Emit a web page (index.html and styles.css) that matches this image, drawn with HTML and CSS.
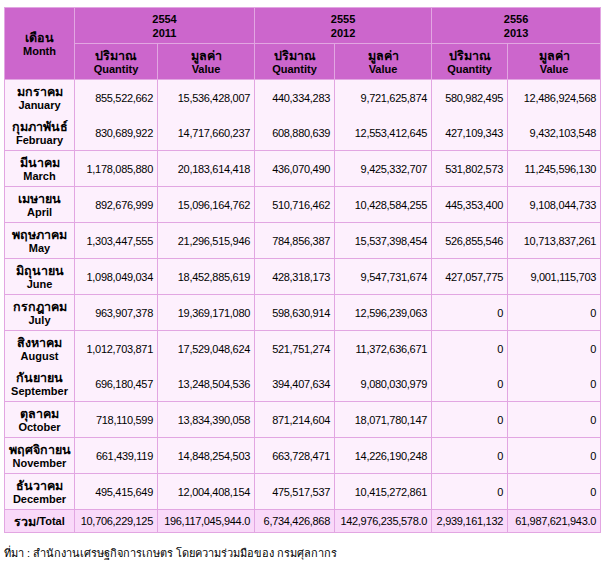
FILE: index.html
```html
<!DOCTYPE html>
<html lang="th">
<head>
<meta charset="utf-8">
<title>Export table</title>
<link rel="stylesheet" href="styles.css">
</head>
<body>
<div class="page">
<table class="data">
  <colgroup>
    <col class="c-month"><col class="c-q1"><col class="c-v1"><col class="c-q2"><col class="c-v2"><col class="c-q3"><col class="c-v3">
  </colgroup>
  <thead>
    <tr>
      <th rowspan="2" class="hd"><span class="th">เดือน</span><br>Month</th>
      <th colspan="2" class="hd">2554<br>2011</th>
      <th colspan="2" class="hd">2555<br>2012</th>
      <th colspan="2" class="hd">2556<br>2013</th>
    </tr>
    <tr>
      <th class="hd"><span class="th">ปริมาณ</span><br>Quantity</th><th class="hd"><span class="th">มูลค่า</span><br>Value</th>
      <th class="hd"><span class="th">ปริมาณ</span><br>Quantity</th><th class="hd"><span class="th">มูลค่า</span><br>Value</th>
      <th class="hd"><span class="th">ปริมาณ</span><br>Quantity</th><th class="hd"><span class="th">มูลค่า</span><br>Value</th>
    </tr>
  </thead>
  <tbody>
    <tr class="row no-bottom"><td class="month"><span class="th">มกราคม</span><br>January</td><td class="num">855,522,662</td><td class="num">15,536,428,007</td><td class="num">440,334,283</td><td class="num">9,721,625,874</td><td class="num">580,982,495</td><td class="num">12,486,924,568</td></tr>
    <tr class="row no-top"><td class="month"><span class="th">กุมภาพันธ์</span><br>February</td><td class="num">830,689,922</td><td class="num">14,717,660,237</td><td class="num">608,880,639</td><td class="num">12,553,412,645</td><td class="num">427,109,343</td><td class="num">9,432,103,548</td></tr>
    <tr class="row"><td class="month"><span class="th">มีนาคม</span><br>March</td><td class="num">1,178,085,880</td><td class="num">20,183,614,418</td><td class="num">436,070,490</td><td class="num">9,425,332,707</td><td class="num">531,802,573</td><td class="num">11,245,596,130</td></tr>
    <tr class="row"><td class="month"><span class="th">เมษายน</span><br>April</td><td class="num">892,676,999</td><td class="num">15,096,164,762</td><td class="num">510,716,462</td><td class="num">10,428,584,255</td><td class="num">445,353,400</td><td class="num">9,108,044,733</td></tr>
    <tr class="row"><td class="month"><span class="th">พฤษภาคม</span><br>May</td><td class="num">1,303,447,555</td><td class="num">21,296,515,946</td><td class="num">784,856,387</td><td class="num">15,537,398,454</td><td class="num">526,855,546</td><td class="num">10,713,837,261</td></tr>
    <tr class="row"><td class="month"><span class="th">มิถุนายน</span><br>June</td><td class="num">1,098,049,034</td><td class="num">18,452,885,619</td><td class="num">428,318,173</td><td class="num">9,547,731,674</td><td class="num">427,057,775</td><td class="num">9,001,115,703</td></tr>
    <tr class="row"><td class="month"><span class="th">กรกฎาคม</span><br>July</td><td class="num">963,907,378</td><td class="num">19,369,171,080</td><td class="num">598,630,914</td><td class="num">12,596,239,063</td><td class="num">0</td><td class="num">0</td></tr>
    <tr class="row no-bottom"><td class="month"><span class="th">สิงหาคม</span><br>August</td><td class="num">1,012,703,871</td><td class="num">17,529,048,624</td><td class="num">521,751,274</td><td class="num">11,372,636,671</td><td class="num">0</td><td class="num">0</td></tr>
    <tr class="row no-top"><td class="month"><span class="th">กันยายน</span><br>September</td><td class="num">696,180,457</td><td class="num">13,248,504,536</td><td class="num">394,407,634</td><td class="num">9,080,030,979</td><td class="num">0</td><td class="num">0</td></tr>
    <tr class="row"><td class="month"><span class="th">ตุลาคม</span><br>October</td><td class="num">718,110,599</td><td class="num">13,834,390,058</td><td class="num">871,214,604</td><td class="num">18,071,780,147</td><td class="num">0</td><td class="num">0</td></tr>
    <tr class="row"><td class="month"><span class="th">พฤศจิกายน</span><br>November</td><td class="num">661,439,119</td><td class="num">14,848,254,503</td><td class="num">663,728,471</td><td class="num">14,226,190,248</td><td class="num">0</td><td class="num">0</td></tr>
    <tr class="row"><td class="month"><span class="th">ธันวาคม</span><br>December</td><td class="num">495,415,649</td><td class="num">12,004,408,154</td><td class="num">475,517,537</td><td class="num">10,415,272,861</td><td class="num">0</td><td class="num">0</td></tr>
    <tr class="total"><td class="month"><span class="th">รวม</span>/Total</td><td class="num">10,706,229,125</td><td class="num">196,117,045,944.0</td><td class="num">6,734,426,868</td><td class="num">142,976,235,578.0</td><td class="num">2,939,161,132</td><td class="num">61,987,621,943.0</td></tr>
  </tbody>
</table>
<p class="source"><span class="th">ที่มา : สำนักงานเศรษฐกิจการเกษตร โดยความร่วมมือของ กรมศุลกากร</span></p>
</div>
</body>
</html>
```

FILE: styles.css
```css
html, body {
  margin: 0;
  padding: 0;
  background: #ffffff;
}
body {
  font-family: "Liberation Sans", "Noto Sans", sans-serif;
  font-size: 11px;
  color: #000000;
}
.page {
  padding: 7px 0 0 4px;
}
.data {
  border-collapse: collapse;
  table-layout: fixed;
  width: 596px;
}
.c-month { width: 70px; }
.c-q1 { width: 83px; }
.c-v1 { width: 97px; }
.c-q2 { width: 80px; }
.c-v2 { width: 97px; }
.c-q3 { width: 76px; }
.c-v3 { width: 93px; }
.data th, .data td {
  border: 1px solid #e2a6e2;
  padding: 0;
  line-height: 14px;
}
.th {
  font-size: 12.5px;
  line-height: 10px;
  vertical-align: -1px;
}
.hd {
  background: #cc66cc;
  border-color: #e9b4e9;
  font-weight: bold;
  text-align: center;
  height: 35px;
}
.row td {
  background: #fdf0fd;
  height: 35px;
}
.total td {
  background: #f9d9f9;
  height: 22px;
}
.month {
  font-weight: bold;
  text-align: center;
}
.num {
  text-align: right;
  padding-right: 4px !important;
  white-space: nowrap;
  letter-spacing: -0.3px;
}
.no-bottom td { border-bottom: none; }
.no-top td { border-top: none; }
.source {
  margin: 13px 0 0 0;
  line-height: 14px;
}
.source .th {
  font-size: 11px;
  line-height: 14px;
  vertical-align: baseline;
}
```
